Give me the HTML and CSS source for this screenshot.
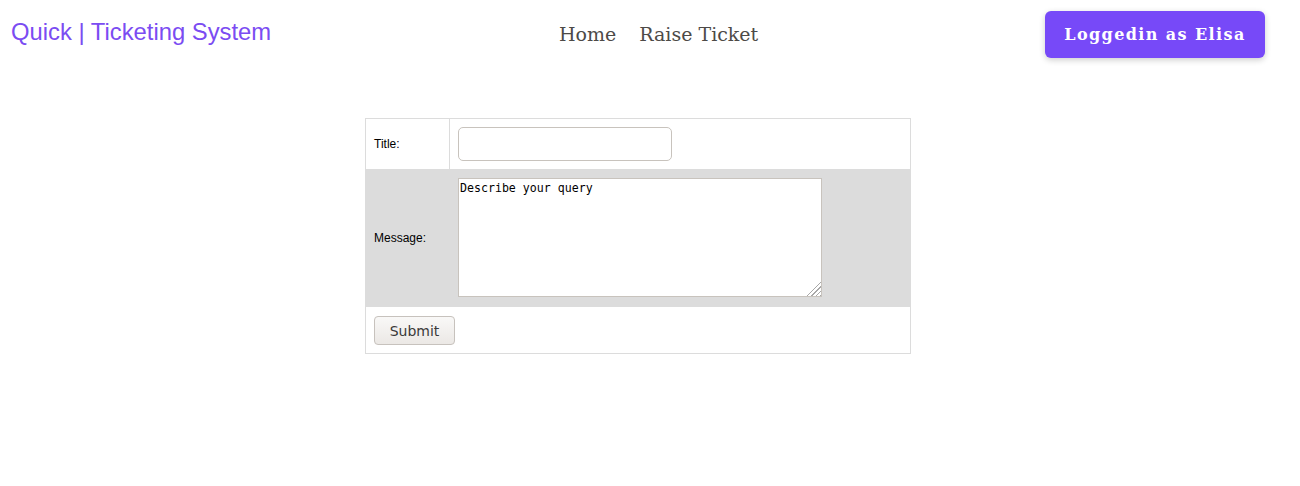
FILE: index.html
```html
<!DOCTYPE html>
<html>
<head>
<meta charset="utf-8">
<link rel="stylesheet" href="styles.css">
</head>
<body>
<header class="topbar">
  <div class="brand">Quick | Ticketing System</div>
  <nav class="nav">
    <a href="#">Home</a>
    <a href="#">Raise Ticket</a>
  </nav>
  <div class="user-wrap">
    <button class="user-btn">Loggedin as Elisa</button>
  </div>
</header>
<main class="content">
  <table class="ticket-form">
    <tr>
      <td class="label">Title:</td>
      <td class="field"><input type="text" class="title-input"></td>
    </tr>
    <tr class="alt">
      <td class="label">Message:</td>
      <td class="field"><textarea class="msg">Describe your query</textarea></td>
    </tr>
    <tr class="last">
      <td colspan="2" class="actions"><button class="submit">Submit</button></td>
    </tr>
  </table>
</main>
</body>
</html>
```
FILE: styles.css
```css
html, body {
  margin: 0;
  padding: 0;
  background: #fff;
}
body {
  font-family: "DejaVu Serif", serif;
}
.topbar {
  display: flex;
  align-items: flex-start;
  padding: 11px 35px 0 11px;
  height: 60px;
}
.brand {
  font-family: "Liberation Sans", Arial, sans-serif;
  font-size: 23.8px;
  color: #7b4cf2;
  margin-top: 7px;
  width: 548px;
}
.nav {
  display: flex;
  gap: 23px;
  margin-top: 12px;
}
.nav a {
  font-family: "DejaVu Serif", serif;
  font-size: 19px;
  color: #4d4a47;
  text-decoration: none;
}
.user-wrap {
  margin-left: auto;
  display: flex;
  justify-content: flex-end;
}
.user-btn {
  width: 220px;
  height: 47px;
  background: #7749f8;
  color: #fff;
  border: none;
  border-radius: 6px;
  font-family: "DejaVu Serif", serif;
  font-weight: bold;
  font-size: 16px;
  letter-spacing: 1.4px;
  box-shadow: 0 2px 6px rgba(0,0,0,0.2);
}
.content {
  display: flex;
  justify-content: center;
  padding-top: 47px;
  padding-right: 24px;
}
.ticket-form {
  border-collapse: collapse;
  width: 546px;
  border: 1px solid #dcdcdc;
  font-family: "Liberation Sans", Arial, sans-serif;
  font-size: 12px;
}
.ticket-form td {
  padding: 8px;
}
.ticket-form .label {
  width: 67px;
  border-right: 1px solid #dcdcdc;
}
.ticket-form .alt {
  background: #dcdcdc;
}
.ticket-form .alt td {
  padding: 9px 8px 10px;
}
.ticket-form .last td {
  padding: 9px 8px 8px;
}
.title-input {
  width: 214px;
  height: 34px;
  box-sizing: border-box;
  border: 1px solid #c8c3bd;
  border-radius: 5px;
  display: block;
}
.msg {
  width: 364px;
  height: 119px;
  box-sizing: border-box;
  border: 1px solid #c8c3bd;
  font-family: "DejaVu Sans Mono", monospace;
  font-size: 11.6px;
  color: #000;
  padding: 2px 1px;
  display: block;
  margin: 0;
}
.msg::-webkit-resizer {
  background:
    linear-gradient(135deg, #fff 52%, transparent 52%),
    repeating-linear-gradient(135deg, #fff 0 2px, #a8a8a8 2px 3px);
}
.submit {
  display: block;
  width: 81px;
  height: 29px;
  border: 1px solid #c7c2bd;
  border-radius: 4px;
  background: linear-gradient(#f9f8f7, #ebe8e5);
  font-family: "DejaVu Sans", sans-serif;
  font-size: 14px;
  color: #3a3a3a;
}
```
